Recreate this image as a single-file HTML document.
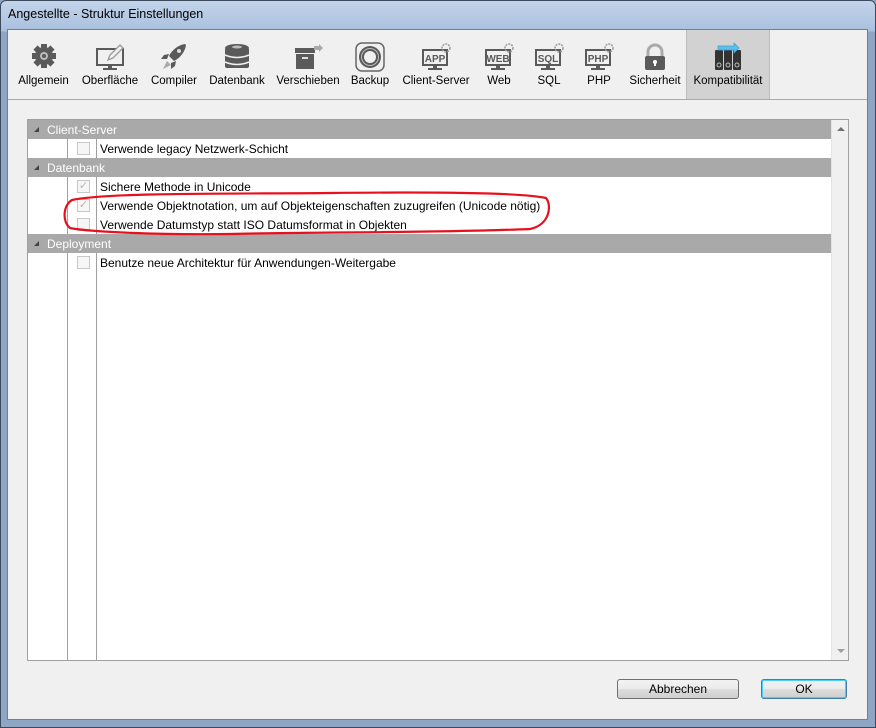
<!DOCTYPE html>
<html><head><meta charset="utf-8"><style>
*{margin:0;padding:0;box-sizing:border-box}
body{width:876px;height:728px;overflow:hidden;background:#8ea3c2;font-family:"Liberation Sans",sans-serif;font-size:12px;color:#000;position:relative}
.frame{position:absolute;left:0;top:0;width:876px;height:728px;border:1px solid #3c4a5e;border-radius:6px 6px 0 0;background:linear-gradient(180deg,#c3d4ea 0,#a9c0de 30px,#8ea5c4 31px,#8ea5c4 100%)}
.title{position:absolute;left:8px;top:7px;font-size:12.5px;color:#000}
.client{position:absolute;left:7px;top:29px;width:861px;height:691px;background:#f0f0f0;border:1px solid #6f7f96}
.tb{position:absolute;left:0;top:0;width:859px;height:70px;border-bottom:1px solid #a9a9a9}
.it{position:absolute;top:0;height:69px;text-align:center;font-size:11.5px}
.it svg{position:absolute;top:12px;left:50%;margin-left:-16px}
.it span{position:absolute;top:45px;left:0;right:0;white-space:nowrap}
.sel{background:#d2d2d2;border-left:1px solid #bcbcbc;border-right:1px solid #bcbcbc}
.list{position:absolute;left:19px;top:89px;width:822px;height:542px;border:1px solid #a0a0a0;background:#fff}
.row{position:absolute;left:0;width:803px;height:19px}
.hdr{background:#a9a9a9;color:#fff;font-size:12px}
.hdr b{font-weight:normal;position:absolute;left:19px;top:3px}
.hdr i{position:absolute;left:6px;top:7px;width:0;height:0;border-left:5px solid transparent;border-bottom:5px solid #444}
.vl{position:absolute;width:1px;background:#a0a0a0}
.cb{position:absolute;left:49px;top:3px;width:13px;height:13px;border:1px solid #c8c8c8;background:#f6f6f6;color:#b5b5b5;font-size:11px;line-height:11px;text-align:center}
.tx{position:absolute;left:72px;top:3px;white-space:nowrap}
.sb{position:absolute;right:0;top:0;width:17px;height:540px;background:#f0f0f0;border-left:1px solid #e4e4e4}
.btn{position:absolute;height:20px;border:1px solid #707070;border-radius:3px;background:linear-gradient(#f2f2f2,#ebebeb 50%,#dddddd 51%,#cfcfcf);text-align:center;line-height:18px;font-size:12px}
</style></head><body>
<div class="frame"></div>
<div class="title">Angestellte - Struktur Einstellungen</div>
<div class="client">
<div class="tb">
<div class="it" style="left:4px;width:63px"><svg width="32" height="30" viewBox="0 0 32 30"><g fill="#5a5a5a"><circle cx="16" cy="14" r="9"/><rect x="13" y="2" width="6" height="24"/><rect x="4" y="11" width="24" height="6"/><rect x="13" y="2" width="6" height="24" transform="rotate(45 16 14)"/><rect x="13" y="2" width="6" height="24" transform="rotate(-45 16 14)"/></g><circle cx="16" cy="14" r="4" fill="#bbb"/><circle cx="16" cy="14" r="2" fill="#5a5a5a"/></svg><span>Allgemein</span></div>
<div class="it" style="left:70px;width:64px"><svg width="32" height="30" viewBox="0 0 32 30"><rect x="3" y="7" width="26" height="16" fill="none" stroke="#5a5a5a" stroke-width="2"/><rect x="14" y="23" width="4" height="3" fill="#5a5a5a"/><rect x="9" y="26" width="14" height="2" fill="#5a5a5a"/><path d="M14 18l2-5 10-10 3 3-10 10z" fill="#f0f0f0" stroke="#999" stroke-width="1.3"/></svg><span>Oberfläche</span></div>
<div class="it" style="left:137px;width:58px"><svg width="32" height="30" viewBox="0 0 32 30"><path d="M27 2c-7 1-13 6-16 12l5 5c6-3 11-9 12-16z" fill="#5a5a5a"/><path d="M11 12l-5 1-3 4 6 0zM18 19l-1 5-4 3 0-6z" fill="#5a5a5a"/><circle cx="21" cy="9" r="2" fill="#ddd"/><path d="M9 19l-4 8 8-4z" fill="#aaa"/></svg><span>Compiler</span></div>
<div class="it" style="left:198px;width:62px"><svg width="32" height="30" viewBox="0 0 32 30"><g fill="#5a5a5a"><ellipse cx="16" cy="6" rx="12" ry="4"/><rect x="4" y="6" width="24" height="20" rx="2"/></g><ellipse cx="16" cy="5" rx="5" ry="1.5" fill="#bbb"/><path d="M4 13q12 5 24 0M4 20q12 5 24 0" stroke="#f0f0f0" stroke-width="1.5" fill="none"/></svg><span>Datenbank</span></div>
<div class="it" style="left:265px;width:70px"><svg width="32" height="30" viewBox="0 0 32 30"><rect x="3" y="6" width="20" height="5" fill="#5a5a5a"/><rect x="4" y="12" width="18" height="15" fill="#5a5a5a"/><rect x="10" y="15" width="6" height="2" fill="#ddd"/><path d="M22 4h5v-2l4 4-4 4v-2h-5z" fill="#aaa"/></svg><span>Verschieben</span></div>
<div class="it" style="left:338px;width:48px"><svg width="32" height="30" viewBox="0 0 32 30"><rect x="2" y="1" width="28" height="28" rx="6" fill="none" stroke="#666" stroke-width="1.5"/><circle cx="16" cy="15" r="11" fill="#5a5a5a"/><circle cx="16" cy="15" r="6" fill="#f0f0f0"/><circle cx="16" cy="15" r="8.5" fill="none" stroke="#bbb" stroke-width="1"/></svg><span>Backup</span></div>
<div class="it" style="left:392px;width:72px"><svg width="32" height="30" viewBox="0 0 32 30"><rect x="3" y="8" width="24" height="15" fill="none" stroke="#5a5a5a" stroke-width="2"/><text x="15" y="20" font-size="10" font-weight="bold" fill="#5a5a5a" text-anchor="middle" font-family="Liberation Sans">APP</text><rect x="13" y="23" width="4" height="3" fill="#5a5a5a"/><rect x="8" y="26" width="14" height="2" fill="#5a5a5a"/><circle cx="26" cy="6" r="4" fill="none" stroke="#999" stroke-width="1.5" stroke-dasharray="2 1"/></svg><span>Client-Server</span></div>
<div class="it" style="left:470px;width:42px"><svg width="32" height="30" viewBox="0 0 32 30"><rect x="3" y="8" width="24" height="15" fill="none" stroke="#5a5a5a" stroke-width="2"/><text x="15" y="20" font-size="10" font-weight="bold" fill="#5a5a5a" text-anchor="middle" font-family="Liberation Sans">WEB</text><rect x="13" y="23" width="4" height="3" fill="#5a5a5a"/><rect x="8" y="26" width="14" height="2" fill="#5a5a5a"/><circle cx="26" cy="6" r="4" fill="none" stroke="#999" stroke-width="1.5" stroke-dasharray="2 1"/></svg><span>Web</span></div>
<div class="it" style="left:520px;width:42px"><svg width="32" height="30" viewBox="0 0 32 30"><rect x="3" y="8" width="24" height="15" fill="none" stroke="#5a5a5a" stroke-width="2"/><text x="15" y="20" font-size="10" font-weight="bold" fill="#5a5a5a" text-anchor="middle" font-family="Liberation Sans">SQL</text><rect x="13" y="23" width="4" height="3" fill="#5a5a5a"/><rect x="8" y="26" width="14" height="2" fill="#5a5a5a"/><circle cx="26" cy="6" r="4" fill="none" stroke="#999" stroke-width="1.5" stroke-dasharray="2 1"/></svg><span>SQL</span></div>
<div class="it" style="left:570px;width:42px"><svg width="32" height="30" viewBox="0 0 32 30"><rect x="3" y="8" width="24" height="15" fill="none" stroke="#5a5a5a" stroke-width="2"/><text x="15" y="20" font-size="10" font-weight="bold" fill="#5a5a5a" text-anchor="middle" font-family="Liberation Sans">PHP</text><rect x="13" y="23" width="4" height="3" fill="#5a5a5a"/><rect x="8" y="26" width="14" height="2" fill="#5a5a5a"/><circle cx="26" cy="6" r="4" fill="none" stroke="#999" stroke-width="1.5" stroke-dasharray="2 1"/></svg><span>PHP</span></div>
<div class="it" style="left:618px;width:58px"><svg width="32" height="30" viewBox="0 0 32 30"><path d="M9 14v-4a7 7 0 0 1 14 0v4" fill="none" stroke="#aaa" stroke-width="3"/><rect x="6" y="14" width="20" height="14" rx="2" fill="#5a5a5a"/><circle cx="16" cy="20" r="2" fill="#fff"/><rect x="15" y="20" width="2" height="4" fill="#fff"/></svg><span>Sicherheit</span></div>
<div class="it sel" style="left:678px;width:84px"><svg width="32" height="30" viewBox="0 0 32 30"><g fill="#333"><rect x="3" y="8" width="8" height="20" rx="1"/><rect x="12" y="8" width="8" height="20" rx="1"/><rect x="21" y="8" width="8" height="20" rx="1"/></g><g fill="none" stroke="#bbb"><circle cx="7" cy="23" r="2"/><circle cx="16" cy="23" r="2"/><circle cx="25" cy="23" r="2"/></g><path d="M6 4h16v-3l5 5-5 5v-3h-16z" fill="#5cc0ee" stroke="#3a9fd0" stroke-width=".7"/></svg><span>Kompatibilität</span></div>
</div>
<div class="list">
<div class="vl" style="left:39px;top:0;height:540px"></div>
<div class="vl" style="left:68px;top:0;height:540px"></div>
<div class="row hdr" style="top:0"><i></i><b>Client-Server</b></div>
<div class="row" style="top:19px"><div class="cb"></div><div class="tx">Verwende legacy Netzwerk-Schicht</div></div>
<div class="row hdr" style="top:38px"><i></i><b>Datenbank</b></div>
<div class="row" style="top:57px"><div class="cb">✓</div><div class="tx">Sichere Methode in Unicode</div></div>
<div class="row" style="top:76px"><div class="cb">✓</div><div class="tx">Verwende Objektnotation, um auf Objekteigenschaften zuzugreifen (Unicode nötig)</div></div>
<div class="row" style="top:95px"><div class="cb"></div><div class="tx">Verwende Datumstyp statt ISO Datumsformat in Objekten</div></div>
<div class="row hdr" style="top:114px"><i></i><b>Deployment</b></div>
<div class="row" style="top:133px"><div class="cb"></div><div class="tx">Benutze neue Architektur für Anwendungen-Weitergabe</div></div>
<div class="sb"><div style="position:absolute;left:5px;top:7px;border-left:4px solid transparent;border-right:4px solid transparent;border-bottom:4px solid #707070"></div><div style="position:absolute;left:5px;bottom:7px;border-left:4px solid transparent;border-right:4px solid transparent;border-top:4px solid #a0a0a0"></div></div>
</div>
<div class="btn" style="left:609px;top:649px;width:122px">Abbrechen</div>
<div class="btn" style="left:753px;top:649px;width:86px;border-color:#3c7fb1;box-shadow:inset 0 0 0 1px #48d0f8">OK</div>
</div>
<svg style="position:absolute;left:0;top:0" width="876" height="728"><path d="M72 200C110 192 250 194 330 193C420 192 520 192 546 198C552 205 550 225 530 229C440 233 300 232 230 234C160 235 90 232 70 228C62 222 63 205 72 200Z" fill="none" stroke="#e8101c" stroke-width="2.2"/></svg>
</body></html>
